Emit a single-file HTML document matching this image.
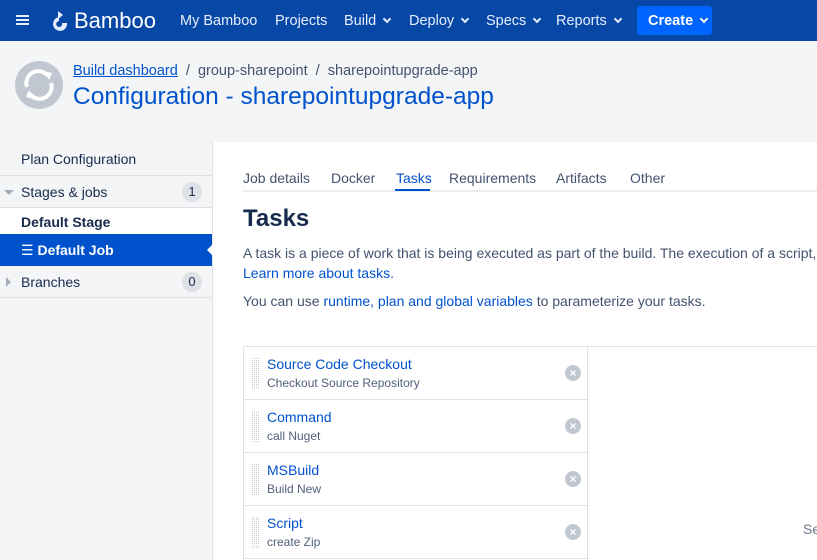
<!DOCTYPE html>
<html><head><meta charset="utf-8"><style>
*{box-sizing:border-box;margin:0;padding:0}
body{width:817px;height:560px;overflow:hidden;font-family:"Liberation Sans",sans-serif;font-size:14px;color:#172b4d;background:#fff;position:relative}
.nav{position:absolute;left:0;top:0;width:817px;height:41px;background:#0747a6;color:#deebff}
.nav span{position:absolute;top:13px;font-size:14.5px;color:#e6efff}
.chev{display:inline-block;width:6px;height:6px;border-right:2px solid #e6efff;border-bottom:2px solid #e6efff;transform:rotate(45deg);margin-left:8px;position:relative;top:-3px}
.hdr{position:absolute;left:0;top:41px;width:817px;height:101px;background:#f4f5f7}
.side{position:absolute;left:0;top:142px;width:213px;height:418px;background:#f4f5f7;border-right:1px solid #dfe1e6}
.si{position:absolute;left:0;width:212px;border-bottom:1px solid #dfe1e6;font-size:14px}
.badge{position:absolute;right:10px;width:20px;height:20px;border-radius:10px;background:#dfe1e6;text-align:center;line-height:20px;font-size:13px}
a{color:#0052cc;text-decoration:none}
.tab{position:absolute;top:170px;font-size:14px;color:#42526e}
.task{position:absolute;left:243px;width:344px;height:53px;border-bottom:1px solid #dfe1e6}
.grip{position:absolute;left:9px;top:10px;width:7px;height:32px;background:repeating-linear-gradient(90deg,#c1c7d0 0 1px,transparent 1px 2px),#fff;opacity:.9;-webkit-mask:repeating-linear-gradient(0deg,#000 0 1px,transparent 1px 2px)}
.task .t{position:absolute;left:24px;top:9px;color:#0052cc;font-size:14px}
.task .s{position:absolute;left:24px;top:29px;color:#505f79;font-size:12px}
.x{position:absolute;left:322px;top:18px;width:16px;height:16px;border-radius:8px;background:#c1c7d0;color:#fff;font-size:12px;font-weight:bold;text-align:center;line-height:16px}
</style></head><body>
<div class="nav">
<div style="position:absolute;left:16px;top:15px;width:13px;height:2px;background:#e6efff;box-shadow:0 4px 0 #e6efff,0 8px 0 #e6efff"></div>
<svg style="position:absolute;left:50px;top:11px" width="19" height="20" viewBox="0 0 19 20"><path d="M8 0 L13 4 L8 8Z" fill="#e6efff"/><path d="M9 6 A7 7 0 1 0 17 12 L12 12 A3 3 0 1 1 9 10Z" fill="#e6efff"/></svg>
<span style="left:74px;top:8px;font-size:22px;color:#fff">Bamboo</span>
<span style="left:180px">My Bamboo</span>
<span style="left:275px">Projects</span>
<span style="left:344px">Build<i class="chev"></i></span>
<span style="left:409px">Deploy<i class="chev"></i></span>
<span style="left:486px">Specs<i class="chev"></i></span>
<span style="left:556px">Reports<i class="chev"></i></span>
<div style="position:absolute;left:637px;top:6px;width:75px;height:29px;background:#0065ff;border-radius:3px"></div>
<span style="left:648px;color:#fff;font-weight:bold">Create<i class="chev" style="border-color:#fff"></i></span>
</div>
<div class="hdr">
<svg style="position:absolute;left:15px;top:20px" width="48" height="48" viewBox="0 0 48 48"><circle cx="24" cy="24" r="24" fill="#c1c7d0"/><path d="M12 26 A12 12 0 0 1 33 15" stroke="#fff" stroke-width="4" fill="none"/><path d="M36 22 A12 12 0 0 1 15 33" stroke="#fff" stroke-width="4" fill="none"/><path d="M29 10 L37 12 L34 19Z M19 38 L11 36 L14 29Z" fill="#fff"/></svg>
<div style="position:absolute;left:73px;top:22px;font-size:14.5px;color:#42526e;white-space:nowrap"><a style="text-decoration:underline">Build dashboard</a> &nbsp;/&nbsp; <a style="color:#42526e">group-sharepoint</a> &nbsp;/&nbsp; <a style="color:#42526e">sharepointupgrade-app</a></div>
<div style="position:absolute;left:73px;top:42px;font-size:24.5px;color:#0052cc;white-space:nowrap">Configuration - sharepointupgrade-app</div>
</div>
<div class="side">
<div class="si" style="top:0;height:34px;padding:9px 21px">Plan Configuration</div>
<div class="si" style="top:34px;height:32px;padding:8px 21px"><span style="position:absolute;left:4px;top:14px;border:5px solid transparent;border-top-color:#a5adba"></span>Stages &amp; jobs<span class="badge" style="top:6px">1</span></div>
<div class="si" style="top:66px;height:26px;background:#fff;padding:6px 21px;font-weight:bold;border:none">Default Stage</div>
<div class="si" style="top:92px;height:32px;background:#0052cc;color:#fff;font-weight:bold;padding:8px 21px;border:none"><span style="font-weight:normal">☰</span> Default Job<span style="position:absolute;right:-1px;top:10px;border:6px solid transparent;border-right-color:#fff"></span></div>
<div class="si" style="top:124px;height:32px;padding:8px 21px"><span style="position:absolute;left:6px;top:11px;border:5px solid transparent;border-left-color:#a5adba"></span>Branches<span class="badge" style="top:6px">0</span></div>
</div>
<div style="position:absolute;left:243px;top:190px;width:574px;height:2px;background:#ebecf0"></div>
<span class="tab" style="left:243px">Job details</span>
<span class="tab" style="left:331px">Docker</span>
<span class="tab" style="left:396px;color:#0052cc">Tasks</span>
<div style="position:absolute;left:395px;top:189px;width:35px;height:2px;background:#0052cc"></div>
<span class="tab" style="left:449px">Requirements</span>
<span class="tab" style="left:556px">Artifacts</span>
<span class="tab" style="left:630px">Other</span>
<div style="position:absolute;left:243px;top:205px;font-size:24px;font-weight:bold;color:#172b4d">Tasks</div>
<div style="position:absolute;left:243px;top:243px;width:574px;overflow:hidden;font-size:14px;color:#42526e;white-space:nowrap;line-height:20px">A task is a piece of work that is being executed as part of the build. The execution of a script, a shell<br><a>Learn more about tasks.</a></div>
<div style="position:absolute;left:243px;top:293px;font-size:14px;color:#42526e">You can use <a>runtime, plan and global variables</a> to parameterize your tasks.</div>
<div style="position:absolute;left:243px;top:346px;width:574px;height:1px;background:#dfe1e6"></div>
<div style="position:absolute;left:587px;top:346px;width:1px;height:214px;background:#dfe1e6"></div>
<div style="position:absolute;left:243px;top:346px;width:1px;height:214px;background:#dfe1e6"></div>
<div class="task" style="top:347px"><div class="grip"></div><div class="t">Source Code Checkout</div><div class="s">Checkout Source Repository</div><div class="x">×</div></div>
<div class="task" style="top:400px"><div class="grip"></div><div class="t">Command</div><div class="s">call Nuget</div><div class="x">×</div></div>
<div class="task" style="top:453px"><div class="grip"></div><div class="t">MSBuild</div><div class="s">Build New</div><div class="x">×</div></div>
<div class="task" style="top:506px"><div class="grip"></div><div class="t">Script</div><div class="s">create Zip</div><div class="x">×</div></div>
<div style="position:absolute;left:803px;top:521px;color:#6b778c;font-size:14px">Se</div>
</body></html>
